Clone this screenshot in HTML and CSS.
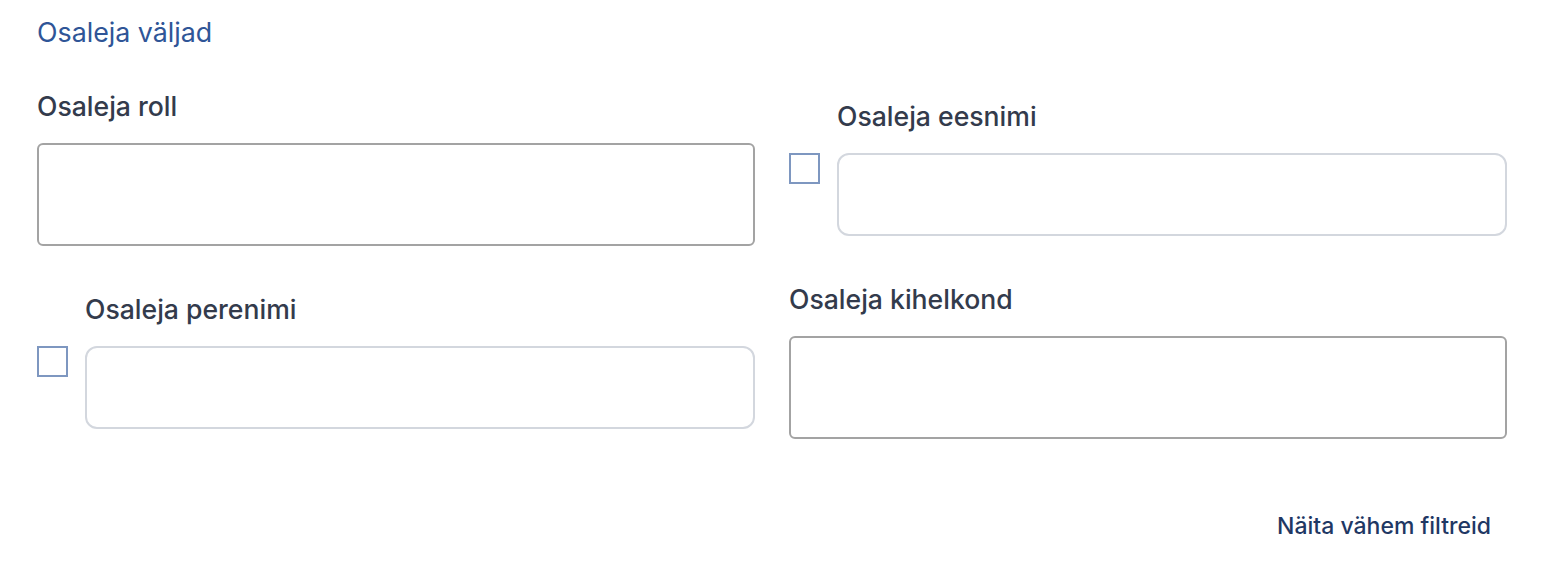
FILE: index.html
```html
<!DOCTYPE html>
<html lang="et">
<head>
<meta charset="utf-8">
<link rel="stylesheet" href="styles.css">
</head>
<body>
<section class="panel">
  <h2 class="panel-title">Osaleja väljad</h2>
  <div class="grid">
    <div class="field">
      <label class="field-label">Osaleja roll</label>
      <div class="input input-tall"></div>
    </div>
    <div class="field field-check">
      <label class="field-label">Osaleja eesnimi</label>
      <div class="check-row">
        <span class="checkbox"></span>
        <div class="input input-soft"></div>
      </div>
    </div>
    <div class="field field-check">
      <label class="field-label">Osaleja perenimi</label>
      <div class="check-row">
        <span class="checkbox"></span>
        <div class="input input-soft"></div>
      </div>
    </div>
    <div class="field">
      <label class="field-label">Osaleja kihelkond</label>
      <div class="input input-tall"></div>
    </div>
  </div>
  <div class="footer">
    <a class="toggle-link">Näita vähem filtreid</a>
  </div>
</section>
</body>
</html>
```
FILE: styles.css
```css
html, body {
  margin: 0;
  padding: 0;
  background: #ffffff;
}
body {
  font-family: Inter, "Noto Sans", sans-serif;
}
.panel {
  padding: 16px 43px 0 37px;
}
.panel-title {
  margin: 0;
  font-size: 26.8px;
  font-weight: 400;
  line-height: 32px;
  color: #2f5597;
}
.grid {
  display: grid;
  grid-template-columns: 1fr 1fr;
  column-gap: 34px;
  row-gap: 38px;
  align-items: center;
  margin-top: 43px;
}
.field {
  display: flex;
  flex-direction: column;
}
.field-label {
  font-size: 26.6px;
  font-weight: 450;
  line-height: 30px;
  color: #333b4c;
  margin-bottom: 22px;
}
.field-check .field-label {
  margin-left: 48px;
}
.check-row {
  display: flex;
  align-items: flex-start;
  gap: 17px;
}
.checkbox {
  flex: none;
  box-sizing: border-box;
  width: 31px;
  height: 31px;
  border: 2px solid #7e97c0;
  background: #fff;
}
.input {
  box-sizing: border-box;
  border: 2px solid #a3a3a3;
  border-radius: 6px;
  background: #fff;
}
.input-tall {
  height: 103px;
}
.input-soft {
  flex: 1;
  height: 83px;
  border-color: #d3d7de;
  border-radius: 12px;
}
.footer {
  display: flex;
  justify-content: flex-end;
  padding-right: 16px;
  margin-top: 73px;
}
.toggle-link {
  font-size: 23px;
  font-weight: 500;
  line-height: 28px;
  color: #1f3864;
  cursor: pointer;
}
```
